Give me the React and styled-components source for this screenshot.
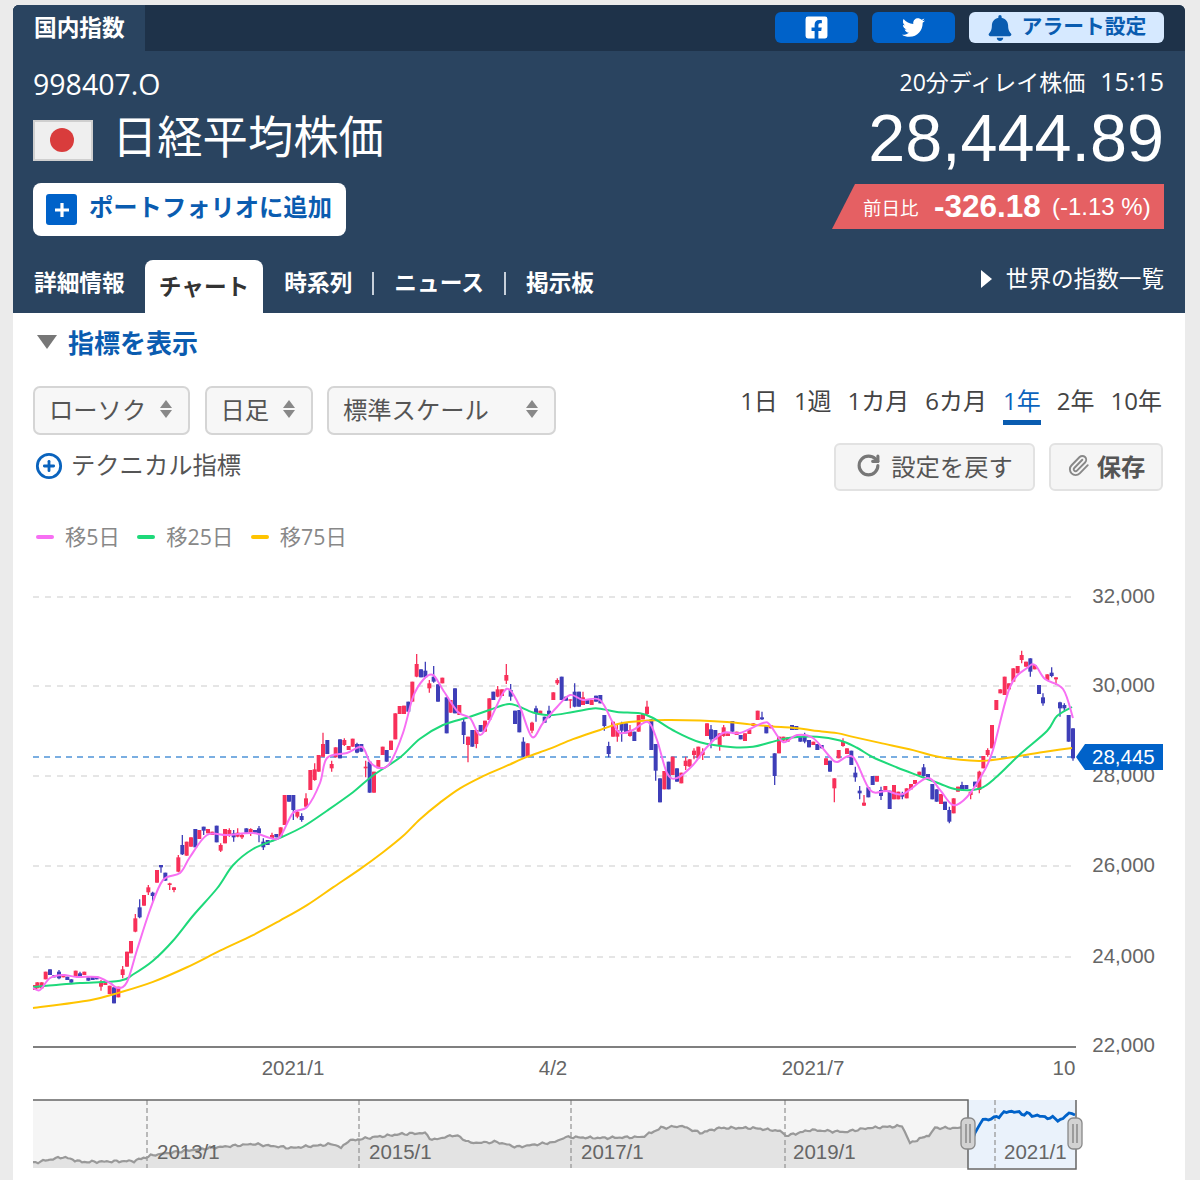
import styled, { createGlobalStyle } from 'styled-components';
import { FaFacebookSquare, FaTwitter, FaBell } from 'react-icons/fa';
import { RotateCw, Paperclip, CirclePlus } from 'lucide-react';

const GlobalStyle = createGlobalStyle`
  html, body { margin: 0; padding: 0; background: #ebebeb; }
  body { font-family: "Open Sans", "Noto Sans CJK JP", sans-serif; color: #444; }
`;

const Page = styled.div`
  width: 1172px;
  height: 1175px;
  margin: 5px 0 0 13px;
  background: #fff;
  border-radius: 6px 6px 0 0;
  overflow: hidden;
`;

const Head = styled.header`
  background: #2a4460;
  color: #fff;
  height: 308px;
  display: flex;
  flex-direction: column;
`;

const TopBar = styled.div`
  height: 46px;
  background: #1e3249;
  display: flex;
  justify-content: space-between;
  padding-right: 21px;
`;

const CategoryTab = styled.div`
  width: 132px;
  background: #2a4460;
  padding-left: 21px;
  box-sizing: border-box;
  font-size: 22.7px;
  font-weight: 700;
  line-height: 46px;
`;

const Social = styled.div`
  display: flex;
  gap: 14px;
  padding-top: 7px;
`;

const ShareButton = styled.div`
  width: 83px;
  height: 31px;
  background: #0062c9;
  border-radius: 6px;
  display: flex;
  align-items: center;
  justify-content: center;
  font-size: 22px;
`;

const AlertButton = styled.div`
  width: 195px;
  height: 31px;
  background: #d6e9ff;
  border-radius: 6px;
  display: flex;
  align-items: center;
  justify-content: center;
  gap: 9px;
  color: #0a5cb0;
  font-size: 20.8px;
  font-weight: 700;
`;

const AlertLabel = styled.span`
  margin-bottom: 5px;
`;

const Summary = styled.div`
  display: flex;
  justify-content: space-between;
  padding: 0 21px 0 20px;
  height: 209px;
`;

const Identity = styled.div`
  padding-top: 15px;
`;

const Code = styled.div`
  font-size: 28.5px;
  line-height: 36px;
`;

const NameRow = styled.div`
  display: flex;
  align-items: center;
  gap: 19px;
  margin-top: 10px;
  height: 50px;
`;

const Flag = styled.div`
  width: 60px;
  height: 41px;
  margin-top: 6px;
  box-sizing: border-box;
  background: #efefef;
  border: 2px solid #cfcfcf;
  display: flex;
  align-items: center;
  justify-content: center;
  &::after {
    content: '';
    width: 24px;
    height: 24px;
    border-radius: 50%;
    background: #d93c3c;
    margin-left: -2px;
  }
`;

const Name = styled.h1`
  margin: 0;
  font-size: 45.3px;
  font-weight: 400;
  line-height: 50px;
`;

const PortfolioButton = styled.div`
  width: 313px;
  height: 53px;
  margin-top: 21px;
  background: #fff;
  border-radius: 8px;
  display: flex;
  align-items: center;
  gap: 12px;
  padding-left: 13px;
  box-sizing: border-box;
  color: #0a5cb0;
  font-size: 24.3px;
  font-weight: 700;
`;

const PortfolioLabel = styled.span`
  margin-bottom: 8px;
`;

const PlusBox = styled.span`
  width: 31px;
  height: 31px;
  border-radius: 3px;
  background: #0062c9;
  color: #fff;
  display: flex;
  align-items: center;
  justify-content: center;
`;

const Quote = styled.div`
  display: flex;
  flex-direction: column;
  align-items: flex-end;
  padding-top: 13px;
`;

const Delay = styled.div`
  font-size: 23px;
  line-height: 34px;
  white-space: nowrap;
`;

const DelayTime = styled.span`
  font-size: 25px;
  margin-left: 15px;
`;

const Price = styled.div`
  font-family: "Liberation Sans", sans-serif;
  font-size: 66.5px;
  line-height: 76px;
  margin-top: 1px;
`;

const ChangeBand = styled.div`
  width: 332px;
  height: 45px;
  margin-top: 8px;
  background: #e56063;
  clip-path: polygon(23px 0, 100% 0, 100% 100%, 0 100%);
  display: flex;
  align-items: center;
  padding-left: 31px;
  box-sizing: border-box;
  font-family: "Liberation Sans", "Noto Sans CJK JP", sans-serif;
`;

const ChangeLabel = styled.span`
  font-size: 18.5px;
  width: 71px;
`;

const ChangeValue = styled.span`
  font-size: 31.5px;
  font-weight: 700;
  width: 118px;
`;

const ChangeRate = styled.span`
  font-size: 24px;
  white-space: pre;
`;

const Tabs = styled.nav`
  flex: 1;
  display: flex;
  align-items: flex-end;
  padding: 0 21px;
`;

const Tab = styled.div`
  font-size: 22.7px;
  font-weight: 700;
  line-height: 53px;
  height: 53px;
  color: ${p => (p.$active ? '#333' : '#fff')};
  background: ${p => (p.$active ? '#fff' : 'transparent')};
  border-radius: ${p => (p.$active ? '8px 8px 0 0' : '0')};
  padding: ${p => (p.$active ? '0 14px' : '0')};
  margin: ${p => (p.$active ? '0 21px 0 20px' : '0 0 4px')};
  box-sizing: border-box;
`;

const TabDivider = styled.span`
  width: 2px;
  height: 23px;
  background: #c7d0da;
  margin: 0 20px 18px;
`;

const WorldLink = styled.div`
  margin: 4px 0 0 auto;
  align-self: flex-start;
  display: flex;
  align-items: center;
  gap: 14px;
  font-size: 22.6px;
  line-height: 38px;
  &::before {
    content: '';
    width: 0;
    height: 0;
    border-left: 11px solid #fff;
    border-top: 9px solid transparent;
    border-bottom: 9px solid transparent;
  }
`;

const Controls = styled.section`
  padding: 11px 21px 0 20px;
`;

const IndicatorToggle = styled.div`
  display: flex;
  align-items: center;
  gap: 11px;
  height: 36px;
  padding-left: 4px;
  color: #0a5cb0;
  font-size: 26px;
  font-weight: 700;
  &::before {
    content: '';
    width: 0;
    height: 0;
    border-top: 14px solid #777;
    border-left: 10px solid transparent;
    border-right: 10px solid transparent;
  }
`;

const SettingsGrid = styled.div`
  display: flex;
  justify-content: space-between;
  margin-top: 26px;
`;

const Column = styled.div`
  display: flex;
  flex-direction: column;
  align-items: ${p => (p.$right ? 'flex-end' : 'flex-start')};
`;

const SelectRow = styled.div`
  display: flex;
  gap: 14.5px;
`;

const Select = styled.div`
  width: ${p => p.$w}px;
  height: 49px;
  box-sizing: border-box;
  background: #f7f7f7;
  border: 2px solid #d5d5d5;
  border-radius: 7px;
  padding: 0 16px 4px 14px;
  display: flex;
  align-items: center;
  justify-content: space-between;
  font-size: 24.3px;
  color: #555;
`;

const Caret = styled.span`
  display: flex;
  flex-direction: column;
  gap: 2px;
  &::before, &::after {
    content: '';
    width: 0;
    height: 0;
    border-left: 6px solid transparent;
    border-right: 6px solid transparent;
  }
  &::before { border-bottom: 8px solid #888; }
  &::after { border-top: 8px solid #888; }
`;

const TechnicalLink = styled.div`
  display: flex;
  align-items: center;
  gap: 8px;
  height: 36px;
  margin-top: 13px;
  padding-left: 2px;
  font-size: 24.3px;
  color: #555;
`;

const TechnicalLabel = styled.span`
  margin-bottom: 6px;
`;

const Ranges = styled.div`
  display: flex;
  gap: 16px;
  height: 39px;
  margin-right: 2px;
`;

const Range = styled.div`
  font-size: 24px;
  line-height: 30px;
  height: 39px;
  box-sizing: border-box;
  color: ${p => (p.$active ? '#0a63bd' : '#444')};
  border-bottom: 5px solid ${p => (p.$active ? '#0a5cb0' : 'transparent')};
`;

const Actions = styled.div`
  display: flex;
  gap: 14px;
  margin: 18px 1px 0 0;
`;

const ActionButton = styled.div`
  width: ${p => p.$w}px;
  height: 48px;
  box-sizing: border-box;
  background: #f5f5f5;
  border: 2px solid #e2e2e2;
  border-radius: 6px;
  display: flex;
  align-items: center;
  justify-content: center;
  gap: ${p => p.$gap}px;
  padding-bottom: 3px;
  font-size: 24.3px;
  font-weight: ${p => (p.$bold ? 700 : 400)};
  color: #555;
`;

const Legend = styled.div`
  display: flex;
  gap: 17.5px;
  margin-top: 23px;
  height: 46px;
  align-items: center;
  padding-left: 3px;
`;

const LegendItem = styled.div`
  display: flex;
  align-items: center;
  gap: 11px;
  padding-bottom: 4px;
  font-size: 21.3px;
  color: #888;
  &::before {
    content: '';
    width: 18px;
    height: 4px;
    margin-top: 4px;
    border-radius: 2px;
    background: ${p => p.$color};
  }
`;

const ChartSvg = styled.svg`
  display: block;
  width: 1172px;
  height: 620px;
  font-family: "Liberation Sans", sans-serif;
`;

// [colour, x, top, bottom, wick top, wick bottom] in zoomed coords (3x), y origin 640
const candlesA = [
  ['r',45,1035,1050],['r',52,1027,1045],['r',65,1027,1045],['r',77,995,1018],['b',90,988,1005],['b',103,1005,1012],['b',117,995,1015,990,1018],['r',130,1003,1012],['b',142,1010,1020],['b',154,1018,1028],
  ['r',167,992,1010],['b',180,1000,1010,995,1012],['r',193,995,1005],['b',205,1012,1022],['b',218,1010,1020],['b',230,1010,1018],['r',243,1025,1040,1020,1052],['r',256,1025,1035],['r',269,1037,1062],['b',282,1042,1090],
  ['r',295,1040,1072],['r',308,988,1005,978,1015],['r',321,935,980],['r',333,903,940],['r',346,835,875,822,877],['b',359,802,832,778,835],['r',372,765,797],['r',385,742,757,735,765],['b',398,758,768,755,785],['r',411,690,728],
  ['b',423,675,682,675,698],['b',436,698,722],['r',449,730,735,728,750],['r',462,742,750,742,757],['r',475,652,695,645,697],['b',487,615,643,585,645],['r',500,605,647],['r',513,592,620],['b',526,567,622],['r',538,570,597],
  ['b',551,560,572,560,585],['r',564,567,580],['r',577,575,585],['b',590,557,607],['r',602,615,632,610,636],['r',615,567,610],['r',628,570,585,565,590],['b',641,580,592,570,605],['r',653,578,590,565,592],['r',666,585,592,580,597],
  ['b',679,565,578],['r',692,567,582,565,588],['b',705,570,578],['b',717,565,580,558,607],['b',730,605,622,595,630],['b',743,600,615],['r',756,585,595,578,597],['b',769,582,592],['r',782,562,592],['r',794,465,555],
  ['b',807,465,485],['b',820,465,510,465,540],['r',832,515,530,510,535],['b',845,528,540,520,545],['r',858,475,500,460,505],['r',871,390,450],['r',884,388,420,370,422],['r',896,345,395],['r',909,312,350,278,352],['b',922,300,342],
  ['r',935,372,385,362,395],['r',947,322,352],['b',960,298,355],['r',973,300,315,295,318],['r',986,318,330],['r',998,296,320],['b',1011,312,338,308,340],['b',1024,312,335],['r',1037,380,385,362,412],['b',1049,365,458],
  ['r',1062,395,458],['r',1075,360,385],['r',1088,320,345],['b',1100,330,365],['r',1113,302,330],['r',1126,220,298],['r',1139,198,222],['r',1152,197,222],['b',1165,185,215],['r',1177,125,185],
];

const candlesB = [
  ['r',50,72,110,42,112],['b',63,88,112],['b',76,92,112,65,115],['r',88,130,145,120,158],['b',101,110,125,78,128],['b',114,133,185],['r',127,113,130],['b',140,172,280],['r',152,180,218],['b',165,145,220],
  ['r',178,195,225],['b',191,245,285,235,312],['r',204,290,315,290,367],['b',217,270,320],['r',229,270,312,270,325],['b',242,255,275],['r',255,242,275],['r',268,175,240],['b',280,155,180],['r',293,148,170,138,172],
  ['r',306,148,168],['r',319,105,122,72,132],['b',332,150,170,132,182],['b',345,212,252],['b',358,210,277],['b',370,305,350,292,352],['r',383,310,350],['r',396,248,272,245,280],['b',408,205,220,197,245],['r',421,212,225],
  ['b',434,230,248],['b',447,212,232,197,235],['r',460,157,180],['r',472,120,130,115,135],['b',485,110,180],['b',498,170,182],['r',511,178,182,178,205],['b',524,155,200,130,202],['b',537,155,200],['r',549,172,195,155,195],
  ['b',562,178,192],['r',575,180,195],['b',588,167,185],['b',601,165,190],['b',613,225,258,225,272],['b',626,318,342,305,352],['r',639,245,290],['r',652,270,290,255,305],['b',665,250,272,245,305],['b',678,250,280],
  ['r',690,270,288,255,290],['b',703,275,303],['r',716,225,275],['r',729,222,238],['r',741,200,222,182,225],['b',754,238,330],['b',767,312,392,312,422],['b',780,415,487],['r',793,393,448],['b',806,365,448],
  ['r',818,350,405],['b',831,385,425],['r',844,398,430],['r',857,362,378,350,390],['r',869,358,380],['r',882,332,345,325,358],['r',895,320,355],['r',908,335,345,325,360],['r',921,250,288],['b',933,268,298,255,325],
  ['b',946,270,298],['r',959,280,318,280,332],['r',971,262,288,255,290],['r',984,280,288],['b',997,243,275],['r',1010,275,285],['b',1022,285,298],['r',1035,280,303],['r',1048,268,282],['r',1060,250,258],
  ['r',1073,212,240],['b',1086,232,238,215,240],['b',1099,255,280],['r',1112,255,265],['b',1124,340,408,340,435],['r',1137,290,340],['r',1150,290,302],['r',1163,292,305],['b',1176,255,270],['b',1189,258,270],
];

const candlesC = [
  ['b',61,288,305],['b',74,285,305,278,310],['b',87,300,322],['r',100,305,315],['b',112,312,330],['b',125,315,325],['r',138,355,375],['b',150,362,395],['r',163,415,445,415,487],['r',176,330,355],
  ['r',189,305,318,295,320],['r',201,325,342],['b',214,332,375],['b',226,398,412,380,425],['b',239,452,460,438,478],['r',252,488,497,465,498],['b',265,442,472],['b',278,408,435],['r',291,408,425],['b',303,450,468,440,480],
  ['r',316,438,452],['b',329,452,507],['r',342,435,478],['r',355,455,478],['b',367,462,470,455,478],['r',380,445,475],['r',393,432,448],['r',405,420,432],['r',418,395,405],['b',431,382,408,372,410],
  ['b',444,402,415],['b',457,432,478],['b',470,448,485],['r',483,462,492],['b',495,485,510],['b',508,510,545,500,550],['r',521,475,520],['r',534,440,455],['b',546,435,450,425,452],['b',559,435,447],
  ['r',572,455,465,455,478],['b',585,425,440],['r',598,395,450,392,460],['r',610,348,385],['r',623,330,345,325,350],['r',636,255,325],['r',649,180,210],['r',661,148,160],['r',674,110,165],['r',687,130,148],
  ['r',700,85,125],['r',713,78,100],['r',725,45,60,32,70],['r',738,65,80],['b',751,55,95,55,110],['r',764,75,88],['b',777,135,162],['b',789,172,190,160,197],['r',802,103,120],['b',815,98,108,82,112],
  ['r',828,112,118,112,135],['b',840,187,205,185,230],['b',853,195,205,190,215],['b',866,225,305],['b',879,265,355,265,362],
];

const place = (list, ox) =>
  list.map(([c, x, t, b, wt = t, wb = b]) => ({
    c,
    x: ox + x / 3,
    t: 640 + t / 3,
    b: 640 + b / 3,
    wt: 640 + wt / 3,
    wb: 640 + wb / 3,
  }));

const candles = [...place(candlesA, 20), ...place(candlesB, 400), ...place(candlesC, 780)];

const ma75 = [[33,1008],[90,998],[120,995],[153,985],[187,968],[220,950],[253,933],[280,922],[307,907],[333,888],[360,867],[383,852],[403,837],[420,820],[440,800],[460,787],[483,777],[507,763],[527,757],[550,750],[573,740],[600,727],[620,722],[647,719],[667,720],[700,720],[727,721],[750,725],[773,727],[800,728],[813,730],[837,734],[853,734],[880,742],[913,752],[937,756],[970,764],[987,763],[1013,757],[1040,752],[1072,748]];

const ma25 = [[33,987],[53,986],[80,982],[120,982],[133,977],[153,962],[173,942],[193,917],[217,887],[233,863],[253,848],[280,837],[303,829],[327,812],[353,790],[373,777],[400,758],[420,737],[443,723],[470,717],[490,710],[507,702],[517,703],[533,715],[550,717],[573,712],[593,707],[603,708],[617,714],[640,712],[653,715],[673,730],[700,746],[733,747],[753,749],[770,742],[790,737],[817,735],[840,740],[857,747],[873,757],[897,768],[920,777],[940,783],[957,792],[980,791],[997,780],[1020,755],[1047,727],[1057,715],[1072,707]];

const ma5 = [[33,988],[40,990],[50,978],[63,975],[77,977],[97,977],[110,983],[118,988],[127,982],[137,950],[150,910],[163,880],[180,873],[190,857],[207,835],[227,835],[253,833],[270,838],[280,837],[293,813],[307,807],[320,783],[327,758],[347,753],[362,747],[370,762],[380,768],[390,763],[403,733],[413,697],[423,680],[433,675],[443,690],[458,712],[470,718],[480,735],[490,720],[503,693],[510,690],[520,707],[532,737],[543,723],[557,707],[570,695],[583,700],[600,700],[613,723],[620,733],[633,730],[648,722],[657,740],[667,773],[677,778],[693,765],[707,747],[723,733],[740,733],[763,723],[770,725],[783,742],[797,735],[813,738],[830,757],[837,762],[853,757],[870,790],[887,791],[903,794],[927,778],[940,790],[953,805],[967,797],[983,773],[993,750],[1010,687],[1027,668],[1035,665],[1045,679],[1063,689],[1073,718]];

const miniGray = [[33,1163],[63,1157],[82,1162],[134,1161],[153,1155],[184,1151],[210,1148],[253,1144],[291,1148],[333,1144],[341,1148],[348,1141],[375,1137],[402,1134],[425,1133],[432,1140],[455,1135],[471,1143],[497,1142],[517,1147],[555,1142],[566,1137],[600,1138],[642,1137],[661,1128],[682,1126],[700,1133],[719,1128],[753,1128],[780,1131],[786,1136],[810,1130],[845,1132],[868,1128],[902,1126],[910,1143],[929,1135],[935,1128],[968,1128]];

const miniBlue = [[968,1150],[977,1128],[983,1120],[994,1118],[1009,1111],[1032,1115],[1063,1120],[1069,1111],[1075,1115]];

// the long averages are smooth in the picture, so take the hand-trace wobble out
const relax = (pts, passes) => {
  let out = pts;
  for (let n = 0; n < passes; n++) {
    out = out.map((p, i) => {
      if (i === 0 || i === out.length - 1) return p;
      return [p[0], (out[i - 1][1] + 2 * p[1] + out[i + 1][1]) / 4];
    });
  }
  return out;
};

// Catmull-Rom through the traced points
const smooth = pts => {
  let d = `M${pts[0][0]} ${pts[0][1]}`;
  for (let i = 0; i < pts.length - 1; i++) {
    const p0 = pts[i - 1] || pts[i];
    const p1 = pts[i];
    const p2 = pts[i + 1];
    const p3 = pts[i + 2] || p2;
    const c1x = p1[0] + (p2[0] - p0[0]) / 6;
    const c1y = p1[1] + (p2[1] - p0[1]) / 6;
    const c2x = p2[0] - (p3[0] - p1[0]) / 6;
    const c2y = p2[1] - (p3[1] - p1[1]) / 6;
    d += `C${c1x.toFixed(1)} ${c1y.toFixed(1)} ${c2x.toFixed(1)} ${c2y.toFixed(1)} ${p2[0]} ${p2[1]}`;
  }
  return d;
};

// the overview line is noisy, so wobble it between the traced points
const jagged = (pts, amp) => {
  const out = [];
  for (let i = 0; i < pts.length - 1; i++) {
    const [x1, y1] = pts[i];
    const [x2, y2] = pts[i + 1];
    const n = Math.max(1, Math.round((x2 - x1) / 2.5));
    for (let k = 0; k < n; k++) {
      const x = x1 + ((x2 - x1) * k) / n;
      const y = y1 + ((y2 - y1) * k) / n + (Math.sin(x * 1.7) * 0.7 + Math.sin(x * 0.53) * 0.6) * amp;
      out.push(`${x.toFixed(1)} ${y.toFixed(1)}`);
    }
  }
  out.push(pts[pts.length - 1].join(' '));
  return out;
};

const grid = [
  ['32,000', 597],
  ['30,000', 686],
  ['28,000', 776],
  ['26,000', 866],
  ['24,000', 957],
];

const Chart = () => {
  const gray = jagged(miniGray, 1);
  const blue = jagged(miniBlue, 1.6);
  return (
    <ChartSvg viewBox="13 560 1172 620">
      {grid.map(([label, y]) => (
        <g key={label}>
          <line x1="33" x2="1076" y1={y} y2={y} stroke="#ddd" strokeWidth="1.5" strokeDasharray="6 6" />
          <text x="1155" y={y + 6} textAnchor="end" fontSize="20.5" fill="#666">{label}</text>
        </g>
      ))}
      <line x1="33" x2="1076" y1="757" y2="757" stroke="#4f94d8" strokeWidth="1.5" strokeDasharray="6 5" />
      <line x1="33" x2="1076" y1="1047" y2="1047" stroke="#555" strokeWidth="1.5" />
      <text x="1155" y="1052" textAnchor="end" fontSize="20.5" fill="#666">22,000</text>

      {candles.map((k, i) => {
        const fill = k.c === 'r' ? '#f8305a' : '#3e3eb8';
        return (
          <g key={i}>
            <line x1={k.x} x2={k.x} y1={k.wt} y2={k.wb} stroke={fill} strokeWidth="1.3" />
            <rect x={k.x - 2} y={k.t} width="4" height={k.b - k.t} fill={fill} />
          </g>
        );
      })}

      <path d={smooth(relax(ma75, 2))} fill="none" stroke="#ffc400" strokeWidth="2" />
      <path d={smooth(relax(ma25, 1))} fill="none" stroke="#1ed97a" strokeWidth="2" />
      <path d={smooth(ma5)} fill="none" stroke="#f76ff3" strokeWidth="2" />

      <path d="M1076 757L1085 744H1163V770H1085Z" fill="#0062c9" />
      <text x="1092" y="764" fontSize="20.5" fill="#fff">28,445</text>

      <text x="293" y="1075" textAnchor="middle" fontSize="20.5" fill="#666">2021/1</text>
      <text x="553" y="1075" textAnchor="middle" fontSize="20.5" fill="#666">4/2</text>
      <text x="813" y="1075" textAnchor="middle" fontSize="20.5" fill="#666">2021/7</text>
      <text x="1064" y="1075" textAnchor="middle" fontSize="20.5" fill="#666">10</text>

      <rect x="33" y="1100" width="935" height="68" fill="#f5f5f5" />
      <rect x="968" y="1100" width="108" height="68" fill="#eaf2fb" />
      <path d={`M${gray.join('L')}L968 1168L33 1168Z`} fill="#e3e3e3" />
      {[147, 359, 571, 785, 995].map(x => (
        <line key={x} x1={x} x2={x} y1="1100" y2="1168" stroke="#999" strokeWidth="1.3" strokeDasharray="5 3" />
      ))}
      <path d={`M${gray.join('L')}`} fill="none" stroke="#999" strokeWidth="2.2" />
      <path d={`M${blue.join('L')}`} fill="none" stroke="#0062c9" strokeWidth="2.8" />
      {[['2013/1', 157], ['2015/1', 369], ['2017/1', 581], ['2019/1', 793], ['2021/1', 1004]].map(([t, x]) => (
        <text key={t} x={x} y="1159" fontSize="20.5" fill="#666">{t}</text>
      ))}
      <path d="M33 1100H968V1169H1076V1100" fill="none" stroke="#666" strokeWidth="1.5" />
      {[968, 1075].map(x => (
        <g key={x}>
          <rect x={x - 7} y="1118" width="14" height="31" rx="5" fill="#d2d2d2" stroke="#888" strokeWidth="1.3" />
          <line x1={x - 2} x2={x - 2} y1="1124" y2="1143" stroke="#777" strokeWidth="1.2" />
          <line x1={x + 2} x2={x + 2} y1="1124" y2="1143" stroke="#777" strokeWidth="1.2" />
        </g>
      ))}
    </ChartSvg>
  );
};

const ranges = ['1日', '1週', '1カ月', '6カ月', '1年', '2年', '10年'];

const App = () => (
  <>
    <GlobalStyle />
    <Page>
      <Head>
        <TopBar>
          <CategoryTab>国内指数</CategoryTab>
          <Social>
            <ShareButton><FaFacebookSquare size={25} /></ShareButton>
            <ShareButton><FaTwitter size={23} /></ShareButton>
            <AlertButton><FaBell size={26} /><AlertLabel>アラート設定</AlertLabel></AlertButton>
          </Social>
        </TopBar>
        <Summary>
          <Identity>
            <Code>998407.O</Code>
            <NameRow>
              <Flag />
              <Name>日経平均株価</Name>
            </NameRow>
            <PortfolioButton>
              <PlusBox>
                <svg width="18" height="18" viewBox="0 0 18 18"><path d="M9 2v14M2 9h14" stroke="#fff" strokeWidth="3.2" /></svg>
              </PlusBox>
              <PortfolioLabel>ポートフォリオに追加</PortfolioLabel>
            </PortfolioButton>
          </Identity>
          <Quote>
            <Delay>20分ディレイ株価<DelayTime>15:15</DelayTime></Delay>
            <Price>28,444.89</Price>
            <ChangeBand>
              <ChangeLabel>前日比</ChangeLabel>
              <ChangeValue>-326.18</ChangeValue>
              <ChangeRate>(-1.13 %)</ChangeRate>
            </ChangeBand>
          </Quote>
        </Summary>
        <Tabs>
          <Tab>詳細情報</Tab>
          <Tab $active>チャート</Tab>
          <Tab>時系列</Tab>
          <TabDivider />
          <Tab>ニュース</Tab>
          <TabDivider />
          <Tab>掲示板</Tab>
          <WorldLink>世界の指数一覧</WorldLink>
        </Tabs>
      </Head>
      <Controls>
        <IndicatorToggle>指標を表示</IndicatorToggle>
        <SettingsGrid>
          <Column>
            <SelectRow>
              <Select $w={157}>ローソク<Caret /></Select>
              <Select $w={108}>日足<Caret /></Select>
              <Select $w={229}>標準スケール<Caret /></Select>
            </SelectRow>
            <TechnicalLink>
              <CirclePlus size={28} color="#0a63bd" strokeWidth={2.4} />
              <TechnicalLabel>テクニカル指標</TechnicalLabel>
            </TechnicalLink>
          </Column>
          <Column $right>
            <Ranges>
              {ranges.map(r => (
                <Range key={r} $active={r === '1年'}>{r}</Range>
              ))}
            </Ranges>
            <Actions>
              <ActionButton $w={201} $gap={10}>
                <RotateCw size={25} color="#777" strokeWidth={3} />
                設定を戻す
              </ActionButton>
              <ActionButton $w={114} $gap={7} $bold>
                <Paperclip size={23} color="#888" strokeWidth={2} />
                保存
              </ActionButton>
            </Actions>
          </Column>
        </SettingsGrid>
        <Legend>
          <LegendItem $color="#f76ff3">移5日</LegendItem>
          <LegendItem $color="#1ed97a">移25日</LegendItem>
          <LegendItem $color="#ffc400">移75日</LegendItem>
        </Legend>
      </Controls>
      <Chart />
    </Page>
  </>
);

export default App;
